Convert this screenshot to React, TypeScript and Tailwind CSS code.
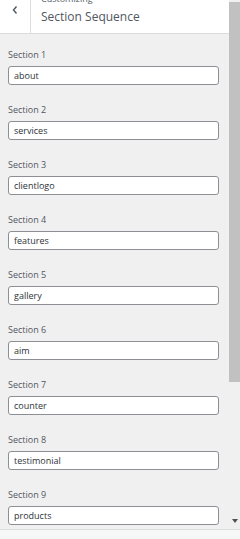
const SECTIONS = [
  "about",
  "services",
  "clientlogo",
  "features",
  "gallery",
  "aim",
  "counter",
  "testimonial",
  "products",
];

export default function App() {
  return (
    <div
      className="flex h-[539px] w-[240px] flex-col overflow-hidden bg-[#f0f0f1]"
      style={{ fontFamily: '"Open Sans", "Noto Sans", sans-serif' }}
    >
      <div className="flex h-[529px] overflow-hidden">
        <div className="w-[229px] shrink-0">
          <div className="flex h-[34px] border-b border-[#dcdcde] bg-white">
            <button
              type="button"
              className="flex h-full w-[31px] shrink-0 items-start justify-center border-r border-[#dcdcde] pt-[4px] text-[#50575e]"
            >
              <svg width="8" height="12" viewBox="0 0 8 12" fill="none">
                <path d="M5.5 2.5 L2.5 6 L5.5 9.5" stroke="currentColor" strokeWidth="1.4" />
              </svg>
            </button>
            <div className="flex flex-col pl-[10px]">
              <span className="-mt-[7px] text-[9px] leading-[12px] text-[#50575e]">Customizing</span>
              <span className="mt-[4px] text-[12px] leading-[16px] text-[#50575e]">Section Sequence</span>
            </div>
          </div>
          <div className="flex flex-col gap-[19px] pl-[8px] pr-[10px] pt-[15px]">
            {SECTIONS.map((s, i) => (
              <div key={s} className="flex flex-col">
                <label className="text-[9px] leading-[12px] text-[#50575e]">Section {i + 1}</label>
                <div className="mt-[5px] flex h-[19px] w-[211px] items-center rounded-[3px] border border-[#8c8f94] bg-white px-[5px] text-[9px] text-[#2c3338]">
                  {s}
                </div>
              </div>
            ))}
          </div>
        </div>
        <div className="relative w-[11px] shrink-0 bg-[#f0f0f0]">
          <div className="mx-auto mt-[2px] h-[380px] w-[11px] bg-[#c1c1c1]" />
          <svg className="absolute bottom-[6px] left-[3px]" width="6" height="4" viewBox="0 0 6 4">
            <path d="M0 0 H6 L3 4 Z" fill="#505050" />
          </svg>
        </div>
      </div>
      <div className="h-[10px] border-t border-[#dcdcde] bg-[#f6f7f7]" />
    </div>
  );
}
